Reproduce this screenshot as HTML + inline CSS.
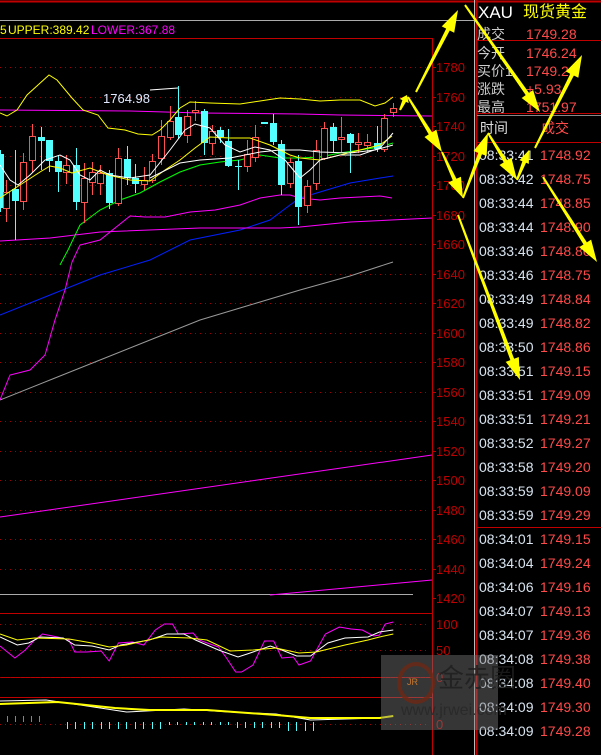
<!DOCTYPE html>
<html><head><meta charset="utf-8"><style>
body{margin:0;background:#000;width:601px;height:755px;overflow:hidden;position:relative;font-family:"Liberation Sans","Noto Sans CJK SC",sans-serif}
.t{position:absolute;font-size:14px;white-space:nowrap;line-height:16px}
.tm{color:#d8e4f0;left:479px}
.pr{color:#ff4a4a;left:540px}
</style></head><body>
<svg id="s" width="601" height="755" style="position:absolute;left:0;top:0">
<rect x="0" y="0" width="601" height="755" fill="#000"/>
<line x1="0" y1="1.5" x2="601" y2="1.5" stroke="#c00000" stroke-width="2"/>
<line x1="0" y1="20.5" x2="474" y2="20.5" stroke="#aaa"/>
<line x1="0" y1="38.5" x2="432" y2="38.5" stroke="#c00000"/>
<line x1="432.5" y1="38" x2="432.5" y2="755" stroke="#c00000"/>
<line x1="474.5" y1="0" x2="474.5" y2="755" stroke="#bbb"/>
<line x1="476.5" y1="0" x2="476.5" y2="755" stroke="#c00000" stroke-width="2"/>
<line x1="477" y1="40.5" x2="601" y2="40.5" stroke="#c00000"/>
<line x1="477" y1="113.5" x2="601" y2="113.5" stroke="#c00000"/>
<line x1="477" y1="115.5" x2="601" y2="115.5" stroke="#888"/>
<line x1="477" y1="142.5" x2="601" y2="142.5" stroke="#c00000"/>
<line x1="477" y1="527.5" x2="601" y2="527.5" stroke="#c00000"/>
<line x1="0" y1="594.5" x2="413" y2="594.5" stroke="#aaa"/>
<rect x="-1" y="613.5" width="433.5" height="64" fill="none" stroke="#c00000"/>
<rect x="-1" y="697.5" width="433.5" height="70" fill="none" stroke="#c00000"/>
<g id="g"></g>
<text x="0" y="34" font-size="12" fill="#ffff00" font-family="Liberation Sans">5</text>
<text x="8" y="34" font-size="12" fill="#ffff00" font-family="Liberation Sans">UPPER:389.42</text>
<text x="91" y="34" font-size="12" fill="#ff00ff" font-family="Liberation Sans">LOWER:367.88</text>
<text x="103" y="103" font-size="13" fill="#e0e8ff" font-family="Liberation Sans">1764.98</text>
</svg>
<div class="t" style="left:478px;top:4px;color:#fff;font-size:17px;line-height:18px">XAU</div>
<div class="t" style="left:523px;top:4px;color:#ffff00;font-size:16px;line-height:18px">现货黄金</div>
<div class="t" style="left:477px;top:26px;color:#ccc">成交</div><div class="t pr" style="left:526px;top:26px">1749.28</div>
<div class="t" style="left:477px;top:45px;color:#ccc">今开</div><div class="t pr" style="left:526px;top:45px">1746.24</div>
<div class="t" style="left:477px;top:63px;color:#ccc">买价1</div><div class="t pr" style="left:526px;top:63px">1749.28</div>
<div class="t" style="left:477px;top:81px;color:#ccc">涨跌</div><div class="t pr" style="left:526px;top:81px">+5.93</div>
<div class="t" style="left:477px;top:99px;color:#ccc">最高</div><div class="t pr" style="left:526px;top:99px">1751.97</div>
<div class="t" style="left:480px;top:120px;color:#ddd">时间</div><div class="t" style="left:541px;top:120px;color:#ff4a4a">成交</div>
<div id="rows">
<div class="t tm" style="top:147px">08:33:41</div><div class="t pr" style="top:147px">1748.92</div>
<div class="t tm" style="top:171px">08:33:42</div><div class="t pr" style="top:171px">1748.75</div>
<div class="t tm" style="top:195px">08:33:44</div><div class="t pr" style="top:195px">1748.85</div>
<div class="t tm" style="top:219px">08:33:44</div><div class="t pr" style="top:219px">1748.90</div>
<div class="t tm" style="top:243px">08:33:46</div><div class="t pr" style="top:243px">1748.80</div>
<div class="t tm" style="top:267px">08:33:46</div><div class="t pr" style="top:267px">1748.75</div>
<div class="t tm" style="top:291px">08:33:49</div><div class="t pr" style="top:291px">1748.84</div>
<div class="t tm" style="top:315px">08:33:49</div><div class="t pr" style="top:315px">1748.82</div>
<div class="t tm" style="top:339px">08:33:50</div><div class="t pr" style="top:339px">1748.86</div>
<div class="t tm" style="top:363px">08:33:51</div><div class="t pr" style="top:363px">1749.15</div>
<div class="t tm" style="top:387px">08:33:51</div><div class="t pr" style="top:387px">1749.09</div>
<div class="t tm" style="top:411px">08:33:51</div><div class="t pr" style="top:411px">1749.21</div>
<div class="t tm" style="top:435px">08:33:52</div><div class="t pr" style="top:435px">1749.27</div>
<div class="t tm" style="top:459px">08:33:58</div><div class="t pr" style="top:459px">1749.20</div>
<div class="t tm" style="top:483px">08:33:59</div><div class="t pr" style="top:483px">1749.09</div>
<div class="t tm" style="top:507px">08:33:59</div><div class="t pr" style="top:507px">1749.29</div>
<div class="t tm" style="top:531px">08:34:01</div><div class="t pr" style="top:531px">1749.15</div>
<div class="t tm" style="top:555px">08:34:04</div><div class="t pr" style="top:555px">1749.24</div>
<div class="t tm" style="top:579px">08:34:06</div><div class="t pr" style="top:579px">1749.16</div>
<div class="t tm" style="top:603px">08:34:07</div><div class="t pr" style="top:603px">1749.13</div>
<div class="t tm" style="top:627px">08:34:07</div><div class="t pr" style="top:627px">1749.36</div>
<div class="t tm" style="top:651px">08:34:08</div><div class="t pr" style="top:651px">1749.38</div>
<div class="t tm" style="top:675px">08:34:08</div><div class="t pr" style="top:675px">1749.40</div>
<div class="t tm" style="top:699px">08:34:09</div><div class="t pr" style="top:699px">1749.30</div>
<div class="t tm" style="top:723px">08:34:09</div><div class="t pr" style="top:723px">1749.28</div>
</div>
<div style="position:absolute;left:381px;top:655px;width:117px;height:75px;background:rgba(120,120,120,0.45)"></div>
<div style="position:absolute;left:397px;top:662px;width:30px;height:34px;border-radius:50%;border:4px solid rgba(110,40,20,0.8)"></div>
<div class="t" style="left:407px;top:674px;font-size:9px;color:#c87830">JR</div>
<div class="t" style="left:438px;top:664px;font-size:26px;line-height:28px;color:rgba(30,30,30,0.8)">金赤圈</div>
<div class="t" style="left:401px;top:703px;font-size:16px;color:rgba(40,40,40,0.85)">www.jrwei.com</div>
<svg id="ov" width="601" height="755" style="position:absolute;left:0;top:0"></svg>
<script>
var NS="http://www.w3.org/2000/svg",g=document.getElementById('g');
function el(n,a,p){var e=document.createElementNS(NS,n);for(var k in a)e.setAttribute(k,a[k]);(p||g).appendChild(e);return e}
var labs=[1780,1760,1740,1720,1700,1680,1660,1640,1620,1600,1580,1560,1540,1520,1500,1480,1460,1440,1420];
labs.forEach(function(v,i){var y=Math.round(67+29.5*i);
 if(i<18)el('line',{x1:0,y1:y+.5,x2:430,y2:y+.5,stroke:'#a00000','stroke-dasharray':'1,4'});
 el('line',{x1:432,y1:y+.5,x2:436,y2:y+.5,stroke:'#c00000'});
 var t=el('text',{x:436,y:y+5,'font-size':'13',fill:'#c00000','font-family':'Liberation Sans'});t.textContent=v;});
[[624,'100'],[650,'50'],[677,'0'],[724,'0']].forEach(function(a){
 el('line',{x1:0,y1:a[0]+.5,x2:430,y2:a[0]+.5,stroke:'#a00000','stroke-dasharray':'1,4'});
 var t=el('text',{x:436,y:a[0]+5,'font-size':'13',fill:'#c00000','font-family':'Liberation Sans'});t.textContent=a[1];});
function pl(pts,c,w){el('polyline',{points:pts,fill:'none',stroke:c,'stroke-width':w||1})}
var K=1.15;
function sp(pts){return pts.split(' ').map(function(p){var a=p.split(',');return (a[0]*K).toFixed(1)+','+a[1]}).join(' ')}
pl('0,517 432,455','#ff00ff');pl('270,595 432,580','#ff00ff');
pl('0,400 50,380 100,360 150,340 200,320 250,305 300,290 350,276 393,262','#999');
pl('0,315 50,295 100,275 150,260 190,240 240,230 270,220 290,205 300,198 320,192 350,183 380,178 393,176','#0020ff');
pl('0,241 50,238 100,232 200,228 280,228 300,227 350,222 432,218','#ff00ff');
pl('0,400 10,375 30,370 45,355 55,320 65,290 72,262 80,245 100,240 130,216 145,217 165,217 190,212 215,210 240,205 260,198 280,195 290,195 300,198 320,200 340,198 360,197 380,196 392,198','#ff00ff');
pl('0,110 130,111 200,113 300,114 340,115 432,116','#ff00ff');
pl('60,265 68,250 80,225 100,210 120,200 140,193 160,182 180,172 200,165 220,162 240,160 260,155 280,158 300,158 320,157 340,153 360,150 380,147 393,143','#00ff00');
pl('150,90 178,88','#fff');
var C=[[0,'c',154,208,150,212],[6,'r',192,208,180,222],[15,'c',189,201,150,240],[23,'r',162,201,153,210],[32,'r',136,160,124,172],[41,'c',137,141,127,170],[49,'c',140,161,140,172],[58,'c',161,172,155,192],[66,'r',165,172,155,184],[76,'c',165,202,148,210],[84,'r',178,202,163,223],[92,'r',172,182,162,195],[100,'r',173,183,165,195],[109,'c',173,203,170,209],[118,'r',158,203,148,206],[127,'c',159,178,146,185],[135,'c',178,184,164,193],[144,'r',180,184,167,190],[152,'r',161,180,154,183],[161,'r',136,158,120,165],[170,'r',121,137,106,140],[178,'c',117,135,86,139],[187,'r',116,135,110,143],[195,'r',110,112,101,121],[204,'c',111,143,109,155],[212,'r',131,143,125,155],[220,'c',130,137,127,143],[228,'c',141,166,129,167],[238,'c',166,167,160,190],[247,'r',154,166,140,172],[255,'r',137,157,125,162],[264,'c',122,124,122,124],[273,'c',123,142,114,145],[281,'c',144,185,140,195],[290,'r',162,183,158,188],[298,'c',161,207,155,225],[307,'r',186,205,180,213],[316,'r',150,183,140,190],[324,'r',128,158,122,160],[333,'c',127,141,123,152],[341,'r',137,139,117,152],[350,'c',134,143,133,173],[358,'r',142,144,133,153],[367,'r',142,145,134,152],[377,'c',143,149,126,152],[384,'r',118,149,114,152],[393,'r',108,112,103,117]];
C.forEach(function(d){var col=d[1]=='c'?'#54ffff':'#ff5050';
 el('line',{x1:d[0]+.5,y1:d[4],x2:d[0]+.5,y2:d[5],stroke:col});
 var h=Math.max(1,d[3]-d[2]);
 if(d[1]=='c')el('rect',{x:d[0]-3,y:d[2],width:7,height:h,fill:col});
 else el('rect',{x:d[0]-2.5,y:d[2]+.5,width:6,height:h,fill:'#000',stroke:col});});
pl('0,113 7,116 17,110 27,95 49,75 57,80 72,98 83,110 98,115 108,128 125,130 138,134 152,135 160,130 170,120 180,108 190,102 210,103 240,104 260,101 280,98 300,99 320,101 340,100 360,100 375,106 385,103 393,97','#ffff00');
pl('0,198 20,185 40,172 50,166 60,168 72,173 90,168 108,175 130,180 150,181 165,170 180,160 195,148 210,137 230,138 250,138 270,145 280,150 290,155 300,158 320,160 340,155 360,150 380,145 392,136','#ffff00');
pl('0,165 10,180 18,185 30,175 45,160 60,155 70,160 80,175 90,180 100,170 110,175 130,178 150,175 170,150 185,130 195,124 210,128 225,145 240,152 255,147 270,150 285,160 300,178 310,170 320,160 340,155 360,155 380,148 393,133','#fff');
pl('150,178 180,163 200,160 230,158 260,152 280,150 300,150 320,152 350,153 375,150 393,145','#fff');
pl(sp('0,646 13,658 22,650 30,640 37,634 50,637 60,640 65,652 75,652 88,651 95,661 103,643 115,642 125,645 135,630 143,624 150,624 155,634 168,633 173,640 185,645 190,647 197,658 205,672 210,672 220,665 230,641 238,641 245,658 255,657 260,665 270,661 283,634 295,627 305,629 315,630 325,636 330,635 335,624 342,622'),'#ff00ff');
pl(sp('0,637 15,645 25,643 35,637 55,638 65,645 80,646 95,650 105,645 130,640 145,634 160,634 170,640 190,650 207,657 215,654 235,646 245,650 258,656 270,656 285,643 300,638 320,637 330,632 342,630'),'#fff');
pl(sp('0,634 15,640 30,638 60,639 80,643 95,647 110,645 140,637 165,638 180,640 200,651 220,650 240,648 260,653 275,652 300,645 320,640 330,637 342,634'),'#ffff00');
for(var x=6;x<=40;x+=7)el('line',{x1:Math.round(x*K)+.5,y1:716,x2:Math.round(x*K)+.5,y2:722,stroke:'#ff5050'});
for(var x=58;x<=280;x+=7.4){var L=x<140?7:(x<200?3:(x<245?6:9));var xx=Math.round(x*K)+.5;el('line',{x1:xx,y1:722,x2:xx,y2:722+L,stroke:'#54ffff'});}
pl(sp('0,701 40,700 70,705 110,712 160,709 200,712 240,714 270,720 330,718 340,716'),'#fff');
pl(sp('0,704 50,702 100,708 130,710 180,710 240,715 270,718 330,718 342,716'),'#ffff00',2);
var ov=document.getElementById('ov');
function arr(x1,y1,x2,y2,w){var dx=x2-x1,dy=y2-y1,l=Math.hypot(dx,dy),ux=dx/l,uy=dy/l,px=-uy,py=ux,hl=Math.min(22,l*.4),hw=w||7;
 var bx=x2-ux*hl,by=y2-uy*hl;
 el('polygon',{points:[x1+px*1,y1+py*1,bx+px*2,by+py*2,bx+px*hw,by+py*hw,x2,y2,bx-px*hw,by-py*hw,bx-px*2,by-py*2,x1-px*1,y1-py*1].join(' '),fill:'#ffff00'},ov);}
arr(400,110,407,95,5);arr(416,92,458,10);arr(465,5,540,112);arr(535,148,582,55);
arr(408,97,442,152);arr(442,152,463,198);arr(463,198,488,133);arr(488,133,517,180);arr(517,180,529,150,5);
arr(543,177,597,262);arr(458,215,520,380);
</script>
</body></html>
